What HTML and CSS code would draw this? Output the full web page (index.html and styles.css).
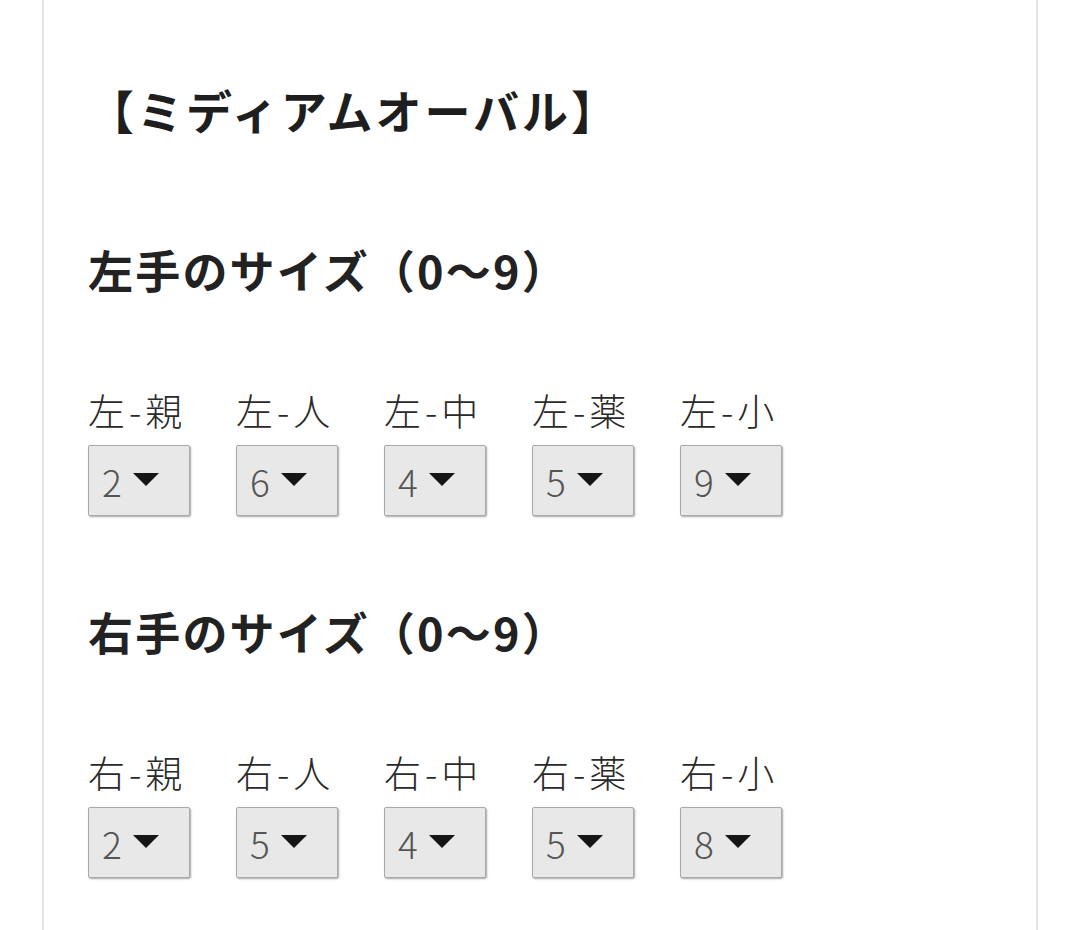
FILE: index.html
```html
<!DOCTYPE html>
<html lang="ja">
<head>
<meta charset="utf-8">
<link rel="stylesheet" href="styles.css">
</head>
<body>
<div class="card">
  <h1 class="title">【ミディアムオーバル】</h1>

  <h2 class="heading">左手のサイズ（0〜9）</h2>
  <div class="row">
    <div class="field"><div class="label">左-親</div><div class="select"><span class="val">2</span><span class="arrow"></span></div></div>
    <div class="field"><div class="label">左-人</div><div class="select"><span class="val">6</span><span class="arrow"></span></div></div>
    <div class="field"><div class="label">左-中</div><div class="select"><span class="val">4</span><span class="arrow"></span></div></div>
    <div class="field"><div class="label">左-薬</div><div class="select"><span class="val">5</span><span class="arrow"></span></div></div>
    <div class="field"><div class="label">左-小</div><div class="select"><span class="val">9</span><span class="arrow"></span></div></div>
  </div>

  <h2 class="heading">右手のサイズ（0〜9）</h2>
  <div class="row">
    <div class="field"><div class="label">右-親</div><div class="select"><span class="val">2</span><span class="arrow"></span></div></div>
    <div class="field"><div class="label">右-人</div><div class="select"><span class="val">5</span><span class="arrow"></span></div></div>
    <div class="field"><div class="label">右-中</div><div class="select"><span class="val">4</span><span class="arrow"></span></div></div>
    <div class="field"><div class="label">右-薬</div><div class="select"><span class="val">5</span><span class="arrow"></span></div></div>
    <div class="field"><div class="label">右-小</div><div class="select"><span class="val">8</span><span class="arrow"></span></div></div>
  </div>
</div>
</body>
</html>
```

FILE: styles.css
```css
html, body {
  margin: 0;
  padding: 0;
  background: #ffffff;
}
body {
  font-family: "Noto Sans CJK JP", "Noto Sans", sans-serif;
  color: #222222;
  height: 930px;
  overflow: hidden;
}
.card {
  margin: 0 42px 0 42px;
  border-left: 2px solid #e4e4e4;
  border-right: 2px solid #e4e4e4;
  box-sizing: border-box;
  width: 996px;
  height: 930px;
  padding: 79px 0 0 44px;
}
.title {
  margin: 0 0 101px 0;
  font-size: 46px;
  line-height: 60px;
  font-weight: 700;
  color: #1e1e1e;
  letter-spacing: 3px;
}
.heading {
  margin: 0 0 88px 0;
  font-size: 45px;
  line-height: 60px;
  font-weight: 700;
  color: #222222;
  letter-spacing: 2.2px;
}
.row {
  display: flex;
  gap: 46px;
  margin-bottom: 86px;
}
.field {
  display: flex;
  flex-direction: column;
  width: 102px;
}
.label {
  font-size: 37px;
  line-height: 44px;
  color: #2a2a2a;
  font-weight: 300;
  white-space: nowrap;
  margin-bottom: 13px;
  letter-spacing: 4px;
}
.select {
  box-sizing: border-box;
  width: 102px;
  height: 71px;
  background: #e8e8e8;
  border: 1px solid #a9a9a9;
  border-radius: 2px;
  box-shadow: 1px 1px 2px rgba(0,0,0,0.35);
  display: flex;
  align-items: center;
  padding: 0 0 0 13px;
  gap: 11px;
}
.val {
  font-size: 37px;
  line-height: 44px;
  color: #555555;
  font-weight: 300;
}
.arrow {
  width: 0;
  height: 0;
  border-left: 13px solid transparent;
  border-right: 13px solid transparent;
  border-top: 13px solid #151515;
  margin-top: -2px;
}
```
